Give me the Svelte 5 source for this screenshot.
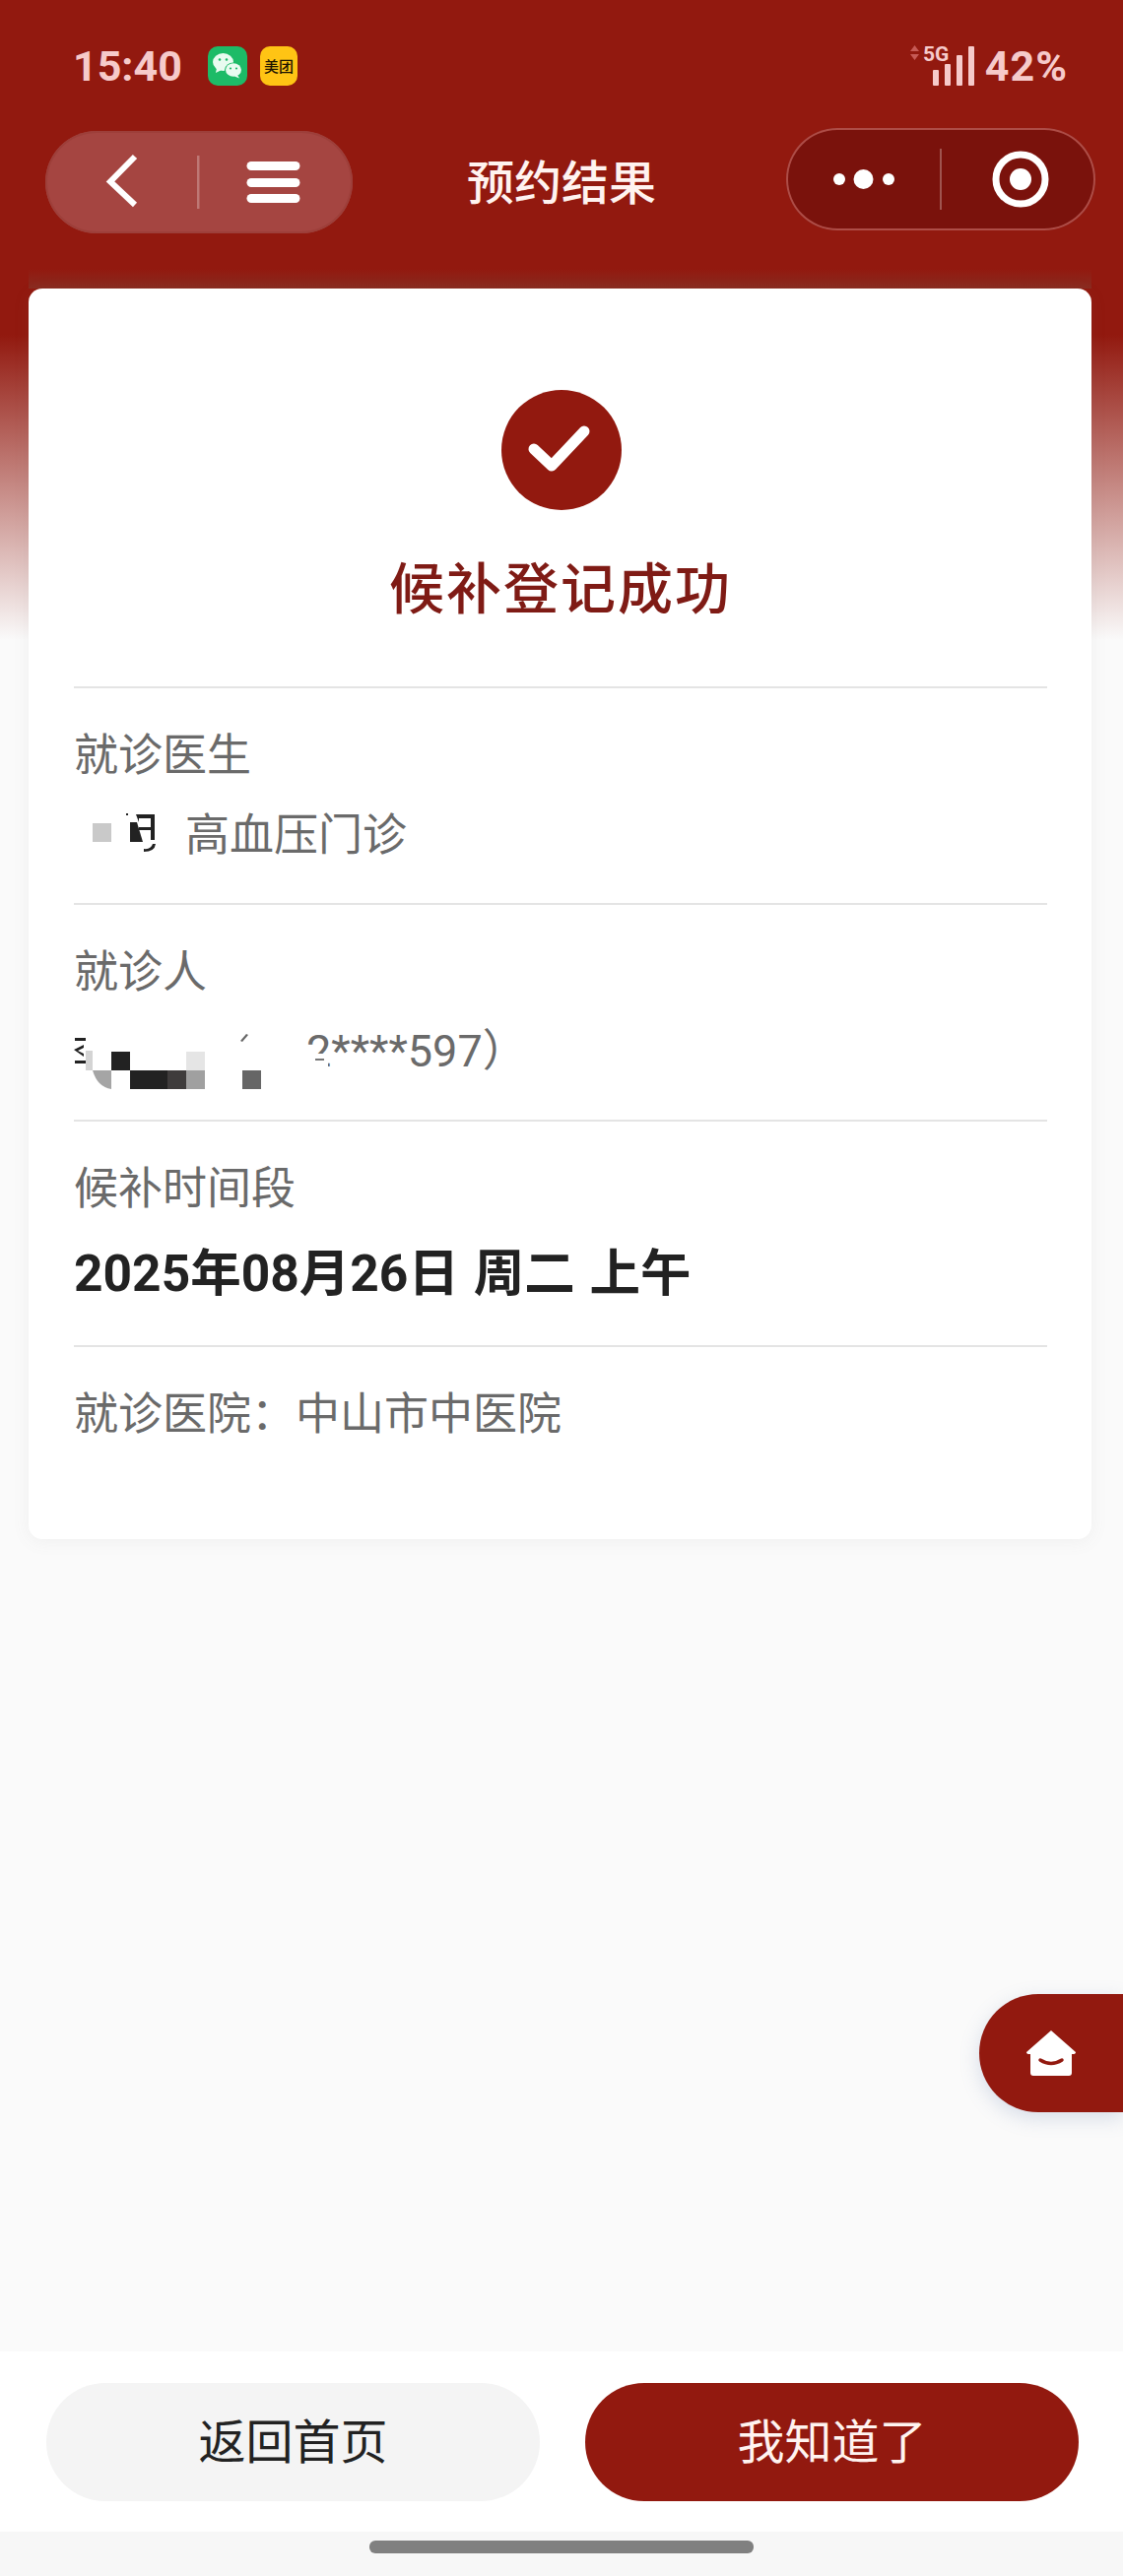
<script>
	const rows = [
		{ label: '就诊医生', kind: 'doctor', value: '高血压门诊' },
		{ label: '就诊人', kind: 'patient', value: '2****597）' },
		{ label: '候补时间段', kind: 'slot', value: '2025年08月26日 周二 上午' }
	];
</script>

<div class="page">
	<header class="header">
		<div class="status">
			<span class="clock">15:40</span>
			<span class="app-icon wechat">
				<svg viewBox="0 0 40 40" width="40" height="40" aria-hidden="true">
					<ellipse cx="15.5" cy="16" rx="10.5" ry="9" fill="#e9fbf0" />
					<path d="M9 22l-1 5 6-3z" fill="#e9fbf0" />
					<ellipse cx="26" cy="24" rx="9" ry="7.6" fill="#1dbb67" />
					<ellipse cx="26" cy="24" rx="8" ry="6.8" fill="#e9fbf0" />
					<path d="M30 29l2 3.5-5-2z" fill="#e9fbf0" />
					<circle cx="12" cy="13.5" r="1.3" fill="#1dbb67" />
					<circle cx="19" cy="13.5" r="1.3" fill="#1dbb67" />
					<circle cx="23" cy="22.5" r="1.1" fill="#1dbb67" />
					<circle cx="29" cy="22.5" r="1.1" fill="#1dbb67" />
				</svg>
			</span>
			<span class="app-icon meituan">美团</span>
			<span class="status-right">
				<svg class="signal" viewBox="0 0 68 42" width="68" height="42" aria-hidden="true">
					<path d="M5.5 1L10 7H1zM5.5 16L10 10H1z" fill="#c65a55" />
					<text x="14" y="17" class="net">5G</text>
					<rect x="24" y="26" width="6" height="16" rx="1" fill="#f6caca" />
					<rect x="36" y="20" width="6" height="22" rx="1" fill="#f6caca" />
					<rect x="48" y="11" width="6" height="31" rx="1" fill="#f6caca" />
					<rect x="60" y="2" width="6" height="40" rx="1" fill="#f6caca" />
				</svg>
				<span class="battery">42%</span>
			</span>
		</div>

		<nav class="nav">
			<div class="pill back-pill">
				<svg viewBox="0 0 312 104" width="312" height="104" aria-hidden="true">
					<path d="M91 26L66 51.500L91 75" fill="none" stroke="#fff" stroke-width="6" />
					<rect x="154" y="25" width="2.500" height="54" fill="#fff" opacity="0.28" />
					<rect x="204.500" y="31" width="54" height="9" rx="4.500" fill="#fff" />
					<rect x="204.500" y="48" width="54" height="9" rx="4.500" fill="#fff" />
					<rect x="204.500" y="64" width="54" height="9" rx="4.500" fill="#fff" />
				</svg>
			</div>
			<h1 class="title">预约结果</h1>
			<div class="pill menu-pill">
				<svg viewBox="0 0 314 104" width="314" height="104" aria-hidden="true">
					<circle cx="54" cy="52" r="6" fill="#fff" />
					<circle cx="78.500" cy="52" r="10" fill="#fff" />
					<circle cx="104" cy="52" r="6" fill="#fff" />
					<rect x="156" y="21" width="2" height="62" fill="#fff" opacity="0.28" />
					<circle cx="238" cy="52" r="25" fill="none" stroke="#fff" stroke-width="7" />
					<circle cx="238" cy="52" r="11" fill="#fff" />
				</svg>
			</div>
		</nav>
	</header>

	<main class="card">
		<div class="result">
			<svg viewBox="0 0 122 122" width="122" height="122" aria-hidden="true">
				<circle cx="61" cy="61" r="61" fill="#92190f" />
				<path d="M33 60L51 77L84 42" fill="none" stroke="#fff" stroke-width="11" stroke-linecap="round" stroke-linejoin="round" />
			</svg>
			<h2>候补登记成功</h2>
		</div>

		{#each rows as row}
			<section class="row {row.kind}">
				<div class="label">{row.label}</div>
				{#if row.kind === 'doctor'}
					<div class="value">
						<svg class="mosaic" viewBox="0 0 84 48" width="84" height="48" aria-hidden="true">
							<rect x="0" y="15" width="19" height="19" fill="#c9c9c9" />
							<path d="M38 14h7l6 20H38z" fill="#222" />
							<path d="M44 6h19v26h-4V10H47v4zM47 19h12v3H47z" fill="#222" />
							<path d="M52 41q7 1 9-5h3q-1 8-12 8z" fill="#222" />
							<rect x="34" y="5" width="2" height="2" fill="#222" />
						</svg>
						<span>{row.value}</span>
					</div>
				{:else if row.kind === 'patient'}
					<div class="value">
						<svg class="mosaic" viewBox="0 0 190 62" width="190" height="62" aria-hidden="true">
							<rect x="1" y="10" width="11" height="3" fill="#222" />
							<path d="M0 22l10-5v3l-6 3 6 3v3z" fill="#222" />
							<rect x="1" y="33" width="11" height="3" fill="#222" />
							<rect x="12" y="23" width="7" height="20" fill="#d4d4d4" />
							<path d="M19 43h19v19q-14-2-19-19z" fill="#a5a5a5" />
							<rect x="38" y="24" width="19" height="19" fill="#222" />
							<rect x="57" y="43" width="38" height="19" fill="#222" />
							<rect x="95" y="43" width="19" height="19" fill="#3f3c3c" />
							<rect x="114" y="43" width="19" height="19" fill="#a0a0a0" />
							<rect x="114" y="24" width="19" height="19" fill="#e5e5e5" />
							<rect x="171" y="43" width="19" height="19" fill="#666" />
							<path d="M175 6l-6 7 2 1 6-7z" fill="#666" />
						</svg>
						<span class="masked">{row.value}<i class="cover"></i></span>
					</div>
				{:else}
					<div class="value strong">{row.value}</div>
				{/if}
			</section>
		{/each}

		<section class="row hospital">
			<div class="label">就诊医院：中山市中医院</div>
		</section>
	</main>

	<button class="home" aria-label="首页">
		<svg viewBox="0 0 50 46" width="50" height="46" aria-hidden="true">
			<path d="M25 0L50 22q0 2-3 2h-1v19q0 3-3 3H7q-3 0-3-3V24H3q-3 0-3-2z" fill="#fff" />
			<path d="M14 30q11 7 22 0" fill="none" stroke="#92190f" stroke-width="3.500" stroke-linecap="round" />
		</svg>
	</button>

	<footer class="footer">
		<div class="actions">
			<button class="btn light">返回首页</button>
			<button class="btn primary">我知道了</button>
		</div>
		<div class="gesture"><span></span></div>
	</footer>
</div>

<style>
	:global(body) {
		background: #fafafa;
	}

	.page {
		position: relative;
		display: flex;
		flex-direction: column;
		width: 1140px;
		height: 2616px;
		font-family: 'Noto Sans CJK SC', 'Noto Sans', sans-serif;
		background: linear-gradient(#92190f 0, #92190f 340px, #fafafa 650px);
	}

	.header {
		height: 293px;
		flex: none;
	}

	.status {
		display: flex;
		align-items: center;
		padding: 47px 56px 0 74px;
		color: #f6caca;
		font-family: Roboto, 'Noto Sans', sans-serif;
		font-weight: 700;
	}

	.clock {
		width: 137px;
		font-size: 43px;
		line-height: 40px;
	}

	.app-icon {
		display: flex;
		align-items: center;
		justify-content: center;
		width: 40px;
		height: 40px;
		border-radius: 10px;
	}

	.wechat {
		background: #1dbb67;
	}

	.meituan {
		width: 38px;
		margin-left: 13px;
		background: #ffc414;
		color: #1d1400;
		font-family: 'Noto Sans CJK SC', sans-serif;
		font-size: 15px;
		font-weight: 500;
		line-height: 20px;
		white-space: nowrap;
	}

	.status-right {
		display: flex;
		align-items: flex-end;
		gap: 9px;
		margin-left: auto;
		height: 40px;
	}

	.signal {
		display: block;
	}

	.net {
		font-family: Roboto, sans-serif;
		font-size: 21px;
		font-weight: 700;
		fill: #f6caca;
	}

	.battery {
		font-size: 43px;
		line-height: 40px;
		letter-spacing: 1px;
	}

	.nav {
		display: grid;
		grid-template-columns: 312px 1fr 314px;
		align-items: start;
		padding: 43px 28px 0 46px;
	}

	.pill {
		box-sizing: border-box;
		height: 104px;
		border-radius: 52px;
	}

	.pill svg {
		display: block;
	}

	.back-pill {
		margin-top: 3px;
		background: #a54541;
		box-shadow: inset 0 0 0 2px #9d3f3a;
	}

	.menu-pill {
		background: #7a120c;
		box-shadow: inset 0 0 0 2px #ae4d47;
	}

	.title {
		margin: 0;
		padding-right: 16px;
		color: #fff3f0;
		font-size: 48px;
		font-weight: 500;
		line-height: 104px;
		text-align: center;
	}

	.card {
		position: relative;
		box-sizing: border-box;
		flex: none;
		width: 1079px;
		height: 1270px;
		margin-left: 29px;
		padding: 0 45px 0 46px;
		background: #fff;
		border-radius: 14px;
		box-shadow: 0 2px 18px rgba(110, 110, 110, 0.08);
	}

	/* greyish haze on the red right above the card */
	.card::before {
		content: '';
		position: absolute;
		left: 0;
		right: 0;
		top: -20px;
		height: 20px;
		background: linear-gradient(rgba(110, 100, 85, 0), rgba(110, 100, 85, 0.25));
	}

	.result {
		display: flex;
		flex-direction: column;
		align-items: center;
		height: 404px;
		padding-top: 103px;
		box-sizing: border-box;
	}

	.result svg {
		display: block;
		margin-left: 2px;
	}

	.result h2 {
		margin: 36px 0 0;
		color: #7f1b15;
		font-size: 56px;
		font-weight: 500;
		letter-spacing: 2px;
		line-height: 80px;
	}

	.row {
		border-top: 2px solid #e4e4e4;
		padding: 35px 0 42px;
		color: #6a6a6a;
		font-size: 45px;
		line-height: 60px;
	}

	.hospital {
		padding-bottom: 0;
	}

	.value {
		display: flex;
		align-items: center;
		margin-top: 21px;
		height: 60px;
	}

	.mosaic {
		display: block;
		flex: none;
		margin-left: 19px;
		margin-right: 10px;
	}

	.patient .mosaic {
		margin: 0 46px 0 0;
		position: relative;
		top: 10px;
	}

	.masked {
		position: relative;
		top: 3px;
		font-family: Roboto, 'Noto Sans CJK SC', sans-serif;
	}

	/* the mosaic also hides the foot of the first digit */
	.cover {
		position: absolute;
		left: 0;
		top: 32px;
		width: 22px;
		height: 14px;
		background: #fff;
	}

	.cover::after {
		content: '';
		position: absolute;
		left: 9px;
		top: 5px;
		width: 9px;
		height: 2px;
		background: #777;
	}

	.strong {
		margin-top: 30px;
		color: #222;
		font-family: Roboto, 'Noto Sans CJK SC', sans-serif;
		font-size: 51.500px;
		font-weight: 700;
		white-space: pre;
		word-spacing: 2px;
	}

	.home {
		position: absolute;
		right: 0;
		top: 2025px;
		display: flex;
		align-items: center;
		justify-content: flex-end;
		width: 146px;
		height: 120px;
		padding: 0 48px 0 0;
		border: none;
		border-radius: 60px 0 0 60px;
		background: #92190f;
		box-shadow: 0 6px 20px rgba(90, 120, 170, 0.22);
	}

	.footer {
		margin-top: auto;
		background: #f7f7f7;
	}

	.actions {
		display: flex;
		gap: 46px;
		height: 183px;
		padding: 32px 45px 0 47px;
		box-sizing: border-box;
		background: #fff;
	}

	.btn {
		flex: 1;
		height: 120px;
		padding: 0 0 9px;
		border: none;
		border-radius: 60px;
		font-family: inherit;
		font-size: 48px;
	}

	.light {
		background: #f4f4f4;
		color: #222;
	}

	.primary {
		background: #92190f;
		color: #fff3f0;
	}

	.gesture {
		display: flex;
		justify-content: center;
		height: 45px;
		padding-top: 9px;
		box-sizing: border-box;
	}

	.gesture span {
		width: 390px;
		height: 13px;
		border-radius: 6px;
		background: #808080;
	}
</style>
